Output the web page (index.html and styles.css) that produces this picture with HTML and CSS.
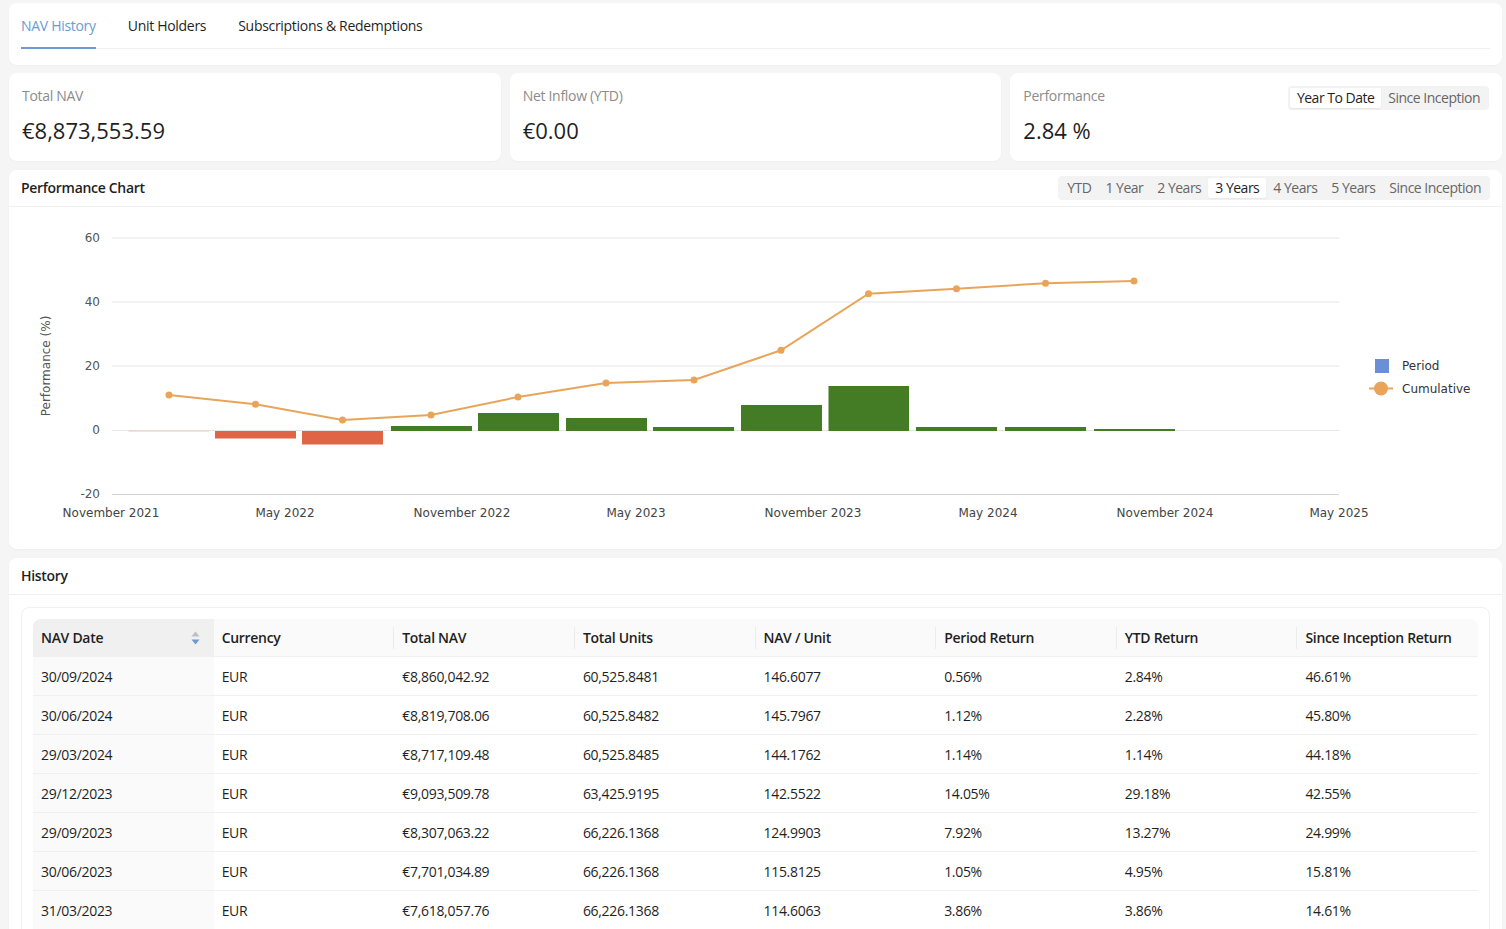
FILE: index.html
```html
<!DOCTYPE html>
<html lang="en">
<head>
<meta charset="utf-8">
<title>NAV History</title>
<link rel="stylesheet" href="styles.css">
</head>
<body>
<div class="page">
  <div class="card tabs-card">
    <div class="tabs">
      <div class="tab active">NAV History</div>
      <div class="tab">Unit Holders</div>
      <div class="tab">Subscriptions &amp; Redemptions</div>
    </div>
  </div>

  <div class="stats">
    <div class="card stat">
      <div class="stat-label">Total NAV</div>
      <div class="stat-value">€8,873,553.59</div>
    </div>
    <div class="card stat">
      <div class="stat-label">Net Inflow (YTD)</div>
      <div class="stat-value">€0.00</div>
    </div>
    <div class="card stat">
      <div class="stat-head">
        <div class="stat-label">Performance</div>
        <div class="seg"><span class="on">Year To Date</span><span>Since Inception</span></div>
      </div>
      <div class="stat-value">2.84 %</div>
    </div>
  </div>

  <div class="card chart-card">
    <div class="card-head">
      <div class="card-title">Performance Chart</div>
      <div class="seg"><span>YTD</span><span>1 Year</span><span>2 Years</span><span class="on">3 Years</span><span>4 Years</span><span>5 Years</span><span>Since Inception</span></div>
    </div>
    <svg class="chart" viewBox="9 207 1493 342" width="1493" height="342">
      <g stroke="#e6e6e6" stroke-width="1">
        <line x1="112" y1="238" x2="1339" y2="238"/>
        <line x1="112" y1="302" x2="1339" y2="302"/>
        <line x1="112" y1="366" x2="1339" y2="366"/>
        <line x1="112" y1="430.5" x2="1339" y2="430.5"/>
        <line x1="112" y1="494.5" x2="1339" y2="494.5" stroke="#d4d4d4"/>
      </g>
      <g class="axis-text ylab">
        <text x="100" y="241.5">60</text>
        <text x="100" y="305.5">40</text>
        <text x="100" y="369.5">20</text>
        <text x="100" y="433.5">0</text>
        <text x="100" y="497.5">-20</text>
      </g>
      <text class="axis-text ytitle" transform="translate(50 366) rotate(-90)">Performance (%)</text>
      <g class="axis-text xlab">
        <text x="111" y="516.5">November 2021</text>
        <text x="285" y="516.5">May 2022</text>
        <text x="462" y="516.5">November 2022</text>
        <text x="636" y="516.5">May 2023</text>
        <text x="813" y="516.5">November 2023</text>
        <text x="988" y="516.5">May 2024</text>
        <text x="1165" y="516.5">November 2024</text>
        <text x="1339" y="516.5">May 2025</text>
      </g>
      <g>
        <rect x="128.5" y="430.5" width="80.5" height="1" fill="#e9c9c0"/>
        <rect x="215" y="431" width="81" height="7.5" fill="#df6546"/>
        <rect x="302" y="431" width="81" height="13.5" fill="#df6546"/>
        <rect x="391" y="426" width="81" height="5" fill="#437c25"/>
        <rect x="478" y="413" width="81" height="18" fill="#437c25"/>
        <rect x="566" y="418" width="81" height="13" fill="#437c25"/>
        <rect x="653" y="427" width="81" height="4" fill="#437c25"/>
        <rect x="741" y="405" width="81" height="26" fill="#437c25"/>
        <rect x="828.5" y="386" width="80.5" height="45" fill="#437c25"/>
        <rect x="916" y="427" width="81" height="4" fill="#437c25"/>
        <rect x="1005" y="427" width="81" height="4" fill="#437c25"/>
        <rect x="1094" y="429" width="81" height="2" fill="#437c25"/>
      </g>
      <polyline fill="none" stroke="#e8a55a" stroke-width="2" points="169,395 255.5,404.3 342.5,420 431,415 518,397 606,383 694,380 781,350.3 868.5,293.7 956.5,288.7 1045.5,283.3 1134,281"/>
      <g fill="#e8a55a">
        <circle cx="169" cy="395" r="3.5"/>
        <circle cx="255.5" cy="404.3" r="3.5"/>
        <circle cx="342.5" cy="420" r="3.5"/>
        <circle cx="431" cy="415" r="3.5"/>
        <circle cx="518" cy="397" r="3.5"/>
        <circle cx="606" cy="383" r="3.5"/>
        <circle cx="694" cy="380" r="3.5"/>
        <circle cx="781" cy="350.3" r="3.5"/>
        <circle cx="868.5" cy="293.7" r="3.5"/>
        <circle cx="956.5" cy="288.7" r="3.5"/>
        <circle cx="1045.5" cy="283.3" r="3.5"/>
        <circle cx="1134" cy="281" r="3.5"/>
      </g>
      <g class="axis-text legend">
        <rect x="1375" y="359" width="14" height="14" fill="#6a8fd6"/>
        <text x="1402" y="370">Period</text>
        <line x1="1369" y1="388.5" x2="1393" y2="388.5" stroke="#e8a55a" stroke-width="2"/>
        <circle cx="1381" cy="388.5" r="7" fill="#e8a55a"/>
        <text x="1402" y="393">Cumulative</text>
      </g>
    </svg>
  </div>

  <div class="card history-card">
    <div class="card-head">
      <div class="card-title">History</div>
    </div>
    <div class="history-body">
      <div class="table-wrap">
        <table class="table">
          <thead>
            <tr>
              <th class="sorted"><div class="th-sort"><span>NAV Date</span>
                <svg class="sorter" width="9" height="14" viewBox="0 0 9 14"><path d="M4.5 0.5 L8.5 5.5 L0.5 5.5 Z" fill="#bfbfbf"/><path d="M4.5 13.5 L8.5 8.5 L0.5 8.5 Z" fill="#6b9bd2"/></svg>
              </div></th>
              <th>Currency</th>
              <th>Total NAV</th>
              <th>Total Units</th>
              <th>NAV / Unit</th>
              <th>Period Return</th>
              <th>YTD Return</th>
              <th class="last">Since Inception Return</th>
            </tr>
          </thead>
          <tbody>
            <tr><td class="sorted">30/09/2024</td><td>EUR</td><td>€8,860,042.92</td><td>60,525.8481</td><td>146.6077</td><td>0.56%</td><td>2.84%</td><td>46.61%</td></tr>
            <tr><td class="sorted">30/06/2024</td><td>EUR</td><td>€8,819,708.06</td><td>60,525.8482</td><td>145.7967</td><td>1.12%</td><td>2.28%</td><td>45.80%</td></tr>
            <tr><td class="sorted">29/03/2024</td><td>EUR</td><td>€8,717,109.48</td><td>60,525.8485</td><td>144.1762</td><td>1.14%</td><td>1.14%</td><td>44.18%</td></tr>
            <tr><td class="sorted">29/12/2023</td><td>EUR</td><td>€9,093,509.78</td><td>63,425.9195</td><td>142.5522</td><td>14.05%</td><td>29.18%</td><td>42.55%</td></tr>
            <tr><td class="sorted">29/09/2023</td><td>EUR</td><td>€8,307,063.22</td><td>66,226.1368</td><td>124.9903</td><td>7.92%</td><td>13.27%</td><td>24.99%</td></tr>
            <tr><td class="sorted">30/06/2023</td><td>EUR</td><td>€7,701,034.89</td><td>66,226.1368</td><td>115.8125</td><td>1.05%</td><td>4.95%</td><td>15.81%</td></tr>
            <tr><td class="sorted">31/03/2023</td><td>EUR</td><td>€7,618,057.76</td><td>66,226.1368</td><td>114.6063</td><td>3.86%</td><td>3.86%</td><td>14.61%</td></tr>
          </tbody>
        </table>
      </div>
    </div>
  </div>
</div>
</body>
</html>
```

FILE: styles.css
```css
* { box-sizing: border-box; }
html, body { height: 100%; }
body {
  margin: 0;
  background: #f5f5f5;
  font-family: "Segoe UI", "Open Sans", "Noto Sans", sans-serif;
  font-size: 14px;
  letter-spacing: -0.3px;
  color: #1f1f1f;
  overflow: hidden;
}
.page {
  display: flex;
  flex-direction: column;
  gap: 9px;
  padding: 3px 4px 0 9px;
}
.card {
  background: #fff;
  border-radius: 8px;
  box-shadow: 0 1px 2px rgba(0,0,0,0.03);
}
.tabs-card {
  padding: 0 12px 16px;
  margin-bottom: -1px;
}
.tabs {
  display: flex;
  gap: 32px;
  border-bottom: 1px solid #f0f0f0;
}
.tab {
  position: relative;
  padding: 12px 0 11px;
  line-height: 22px;
  color: #1f1f1f;
}
.tab.active { color: #6b9bd2; }
.tab.active::after {
  content: "";
  position: absolute;
  left: 0;
  right: 0;
  bottom: -1px;
  height: 2px;
  background: #6b9bd2;
}
.stats {
  display: grid;
  grid-template-columns: 1fr 1fr 1fr;
  gap: 9px;
}
.stat {
  padding: 12px 13px 15px;
  height: 88px;
}
.stat-head {
  display: flex;
  justify-content: space-between;
  align-items: flex-start;
  height: 22px;
}
.stat-label {
  line-height: 22px;
  color: #8c8c8c;
}
.stat-value {
  margin-top: 7px;
  font-size: 22px;
  line-height: 32px;
  letter-spacing: 0;
  color: #1f1f1f;
}
.seg {
  display: inline-flex;
  background: #f3f3f3;
  border-radius: 4px;
  padding: 2px;
  letter-spacing: -0.5px;
}
.seg span {
  padding: 0 7px;
  line-height: 20px;
  border-radius: 2px;
  color: #666;
}
.seg span.on {
  background: #fff;
  color: #1f1f1f;
  box-shadow: 0 1px 2px rgba(0,0,0,0.06);
}
.stat .seg { margin-top: 1px; }
.card-head {
  height: 37px;
  padding: 0 12px;
  display: flex;
  align-items: center;
  justify-content: space-between;
  border-bottom: 1px solid #f0f0f0;
}
.card-title {
  font-weight: 600;
  line-height: 22px;
  color: #1f1f1f;
}
.chart {
  display: block;
  width: 100%;
  height: 342px;
  letter-spacing: 0;
}
.axis-text {
  font-family: "DejaVu Sans", Verdana, sans-serif;
  font-size: 12px;
  letter-spacing: 0;
}
.ylab { fill: #555; text-anchor: end; }
.ytitle { fill: #555; text-anchor: middle; }
.xlab { fill: #444; text-anchor: middle; }
.legend { fill: #333; }
.history-body {
  padding: 12px;
}
.table-wrap {
  border: 1px solid #f0f0f0;
  border-radius: 8px;
  padding: 11px;
}
.table {
  width: 100%;
  border-collapse: separate;
  border-spacing: 0;
  table-layout: fixed;
}
.table th {
  position: relative;
  text-align: left;
  font-weight: 600;
  background: #fafafa;
  padding: 8px 8px 7px;
  line-height: 22px;
  border-bottom: 1px solid #f0f0f0;
}
.table th::before {
  content: "";
  position: absolute;
  right: 0;
  top: 50%;
  width: 1px;
  height: 22px;
  transform: translateY(-50%);
  background: #ececec;
}
.table th.last::before { display: none; }
.table th.sorted::before { display: none; }
.table th:first-child { border-top-left-radius: 8px; }
.table th:last-child { border-top-right-radius: 8px; }
.table th.sorted { background: #f0f0f0; }
.th-sort {
  display: flex;
  justify-content: space-between;
  align-items: center;
}
.sorter { display: block; margin-right: 6px; }
.table td {
  padding: 9px 8px 7px;
  line-height: 22px;
  border-bottom: 1px solid #f0f0f0;
  color: #1f1f1f;
}
.table td.sorted { background: #fafafa; }
```
